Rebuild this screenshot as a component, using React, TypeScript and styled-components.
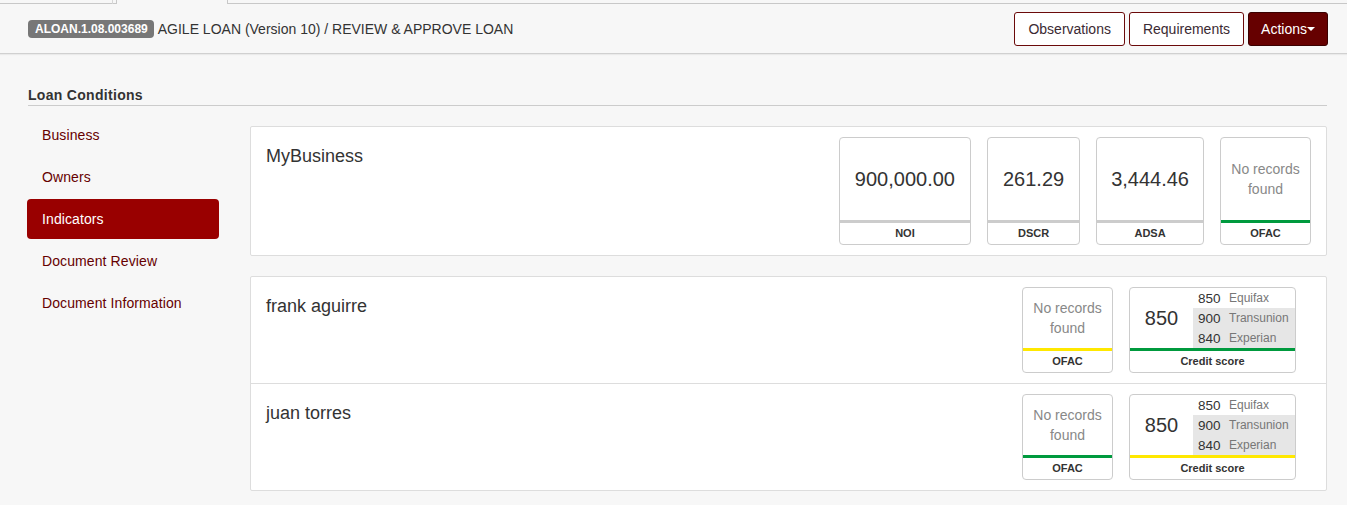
import React from "react";
import styled, { createGlobalStyle } from "styled-components";

const GlobalStyle = createGlobalStyle`
  html, body { margin: 0; padding: 0; background: #f7f7f7; }
  body { font-family: "Liberation Sans", Arial, sans-serif; font-size: 14px; color: #333; }
  * { box-sizing: border-box; }
`;

const Page = styled.div`
  width: 1347px;
  min-height: 505px;
  background: #f7f7f7;
`;

const TabStrip = styled.div`
  display: flex;
  height: 4px;
`;

const PrevTab = styled.div`
  width: 117px;
  height: 4px;
  border-bottom: 1px solid #c8c8c8;
  border-right: 1px solid #c8c8c8;
  position: relative;
  &::after {
    content: "";
    position: absolute;
    top: 0;
    right: 3px;
    width: 1px;
    height: 4px;
    background: #d6d6d6;
  }
`;

const ActiveTab = styled.div`
  width: 110px;
`;

const TabFill = styled.div`
  flex: 1;
  height: 4px;
  border-bottom: 1px solid #c8c8c8;
  border-left: 1px solid #c8c8c8;
`;

const Header = styled.header`
  height: 50px;
  display: flex;
  align-items: center;
  justify-content: space-between;
  padding: 0 19px 0 28px;
  border-bottom: 1px solid #d0d0d0;
  box-shadow: 0 1px 1px rgba(0, 0, 0, 0.05);
`;

const Crumb = styled.div`
  display: flex;
  align-items: center;
  gap: 4px;
  font-size: 14px;
  color: #333;
`;

const Badge = styled.span`
  display: inline-block;
  height: 18px;
  line-height: 18px;
  padding: 0 6px 0 7px;
  border-radius: 4px;
  background: #777;
  color: #fff;
  font-weight: bold;
  font-size: 12px;
`;

const ButtonGroup = styled.div`
  display: flex;
  gap: 4px;
`;

const Button = styled.button<{ $primary?: boolean }>`
  height: 34px;
  padding: 0 ${(p) => (p.$primary ? 12 : 13)}px;
  font-family: "Liberation Sans", Arial, sans-serif;
  font-size: 14px;
  border-radius: 3px;
  border: 1px solid ${(p) => (p.$primary ? "#3a0000" : "#6b0a0a")};
  background: ${(p) => (p.$primary ? "#660000" : "#fff")};
  color: ${(p) => (p.$primary ? "#fff" : "#3b2a33")};
  display: inline-flex;
  align-items: center;
  cursor: pointer;
`;

const Caret = styled.span`
  display: inline-block;
  width: 0;
  height: 0;
  border-top: 4px solid #fff;
  border-left: 4px solid transparent;
  border-right: 4px solid transparent;
  margin-top: 1px;
`;

const Content = styled.main`
  padding: 0 20px 0 27px;
`;

const SectionTitle = styled.h2`
  margin: 32px 0 0 1px;
  font-size: 14px;
  font-weight: bold;
  letter-spacing: 0.3px;
  line-height: 18px;
  color: #333;
  padding-bottom: 1px;
  border-bottom: 1px solid #ccc;
`;

const Body = styled.div`
  display: grid;
  grid-template-columns: 192px 1fr;
  column-gap: 31px;
`;

const Nav = styled.nav`
  display: flex;
  flex-direction: column;
  gap: 2px;
  padding-top: 9px;
`;

const NavItem = styled.a<{ $active?: boolean }>`
  display: block;
  height: 40px;
  line-height: 40px;
  padding: 0 15px;
  border-radius: 4px;
  font-size: 14px;
  letter-spacing: 0.1px;
  text-decoration: none;
  color: ${(p) => (p.$active ? "#fff" : "#660000")};
  background: ${(p) => (p.$active ? "#990000" : "transparent")};
`;

const Main = styled.div`
  padding-top: 20px;
  display: flex;
  flex-direction: column;
  gap: 20px;
`;

const Panel = styled.section`
  background: #fff;
  border: 1px solid #ddd;
  border-radius: 2px;
`;

const Row = styled.div<{ $padRight: number }>`
  display: flex;
  justify-content: space-between;
  align-items: flex-start;
  padding: 10px ${(p) => p.$padRight}px 10px 15px;
  & + & {
    border-top: 1px solid #ddd;
  }
`;

const Name = styled.div`
  margin-top: 9px;
  font-size: 18px;
  line-height: 20px;
  color: #333;
`;

const Cards = styled.div`
  display: flex;
  gap: 16px;
`;

const Card = styled.div`
  border: 1px solid #ccc;
  border-radius: 4px;
  background: #fff;
  display: flex;
  flex-direction: column;
  overflow: hidden;
`;

const CardValue = styled.div<{ $h: number; $muted?: boolean; $pad: number }>`
  height: ${(p) => p.$h}px;
  display: flex;
  align-items: center;
  justify-content: center;
  text-align: center;
  padding: 0 ${(p) => p.$pad}px;
  font-size: ${(p) => (p.$muted ? "14px" : "20px")};
  line-height: 20px;
  color: ${(p) => (p.$muted ? "#888" : "#333")};
`;

const Bar = styled.div<{ $color: string }>`
  height: 3px;
  background: ${(p) => p.$color};
`;

const CardLabel = styled.div`
  height: 21px;
  line-height: 21px;
  text-align: center;
  font-size: 11px;
  font-weight: bold;
  color: #333;
`;

const ScoreBody = styled.div`
  height: 60px;
  display: flex;
`;

const ScoreMain = styled.div`
  width: 63px;
  display: flex;
  align-items: center;
  justify-content: center;
  font-size: 20px;
  color: #333;
`;

const ScoreTable = styled.div`
  flex: 1;
  display: flex;
  flex-direction: column;
`;

const ScoreRow = styled.div<{ $shaded?: boolean }>`
  height: 20px;
  display: flex;
  align-items: center;
  padding-left: 5px;
  background: ${(p) => (p.$shaded ? "#e6e6e6" : "transparent")};
`;

const ScoreNum = styled.span`
  width: 31px;
  font-size: 13.5px;
  color: #333;
`;

const Bureau = styled.span`
  font-size: 12px;
  color: #777;
`;

const GREY = "#cccccc";
const GREEN = "#009a3e";
const YELLOW = "#ffe800";

type Metric = { label: string; value: string; muted?: boolean; bar: string; pad: number };

const metrics: Metric[] = [
  { label: "NOI", value: "900,000.00", bar: GREY, pad: 15 },
  { label: "DSCR", value: "261.29", bar: GREY, pad: 15 },
  { label: "ADSA", value: "3,444.46", bar: GREY, pad: 14 },
  { label: "OFAC", value: "No records found", muted: true, bar: GREEN, pad: 10 },
];

const owners = [
  { name: "frank aguirre", ofac: YELLOW, credit: GREEN },
  { name: "juan torres", ofac: GREEN, credit: YELLOW },
];

const bureaus = [
  { score: "850", name: "Equifax", shaded: false },
  { score: "900", name: "Transunion", shaded: true },
  { score: "840", name: "Experian", shaded: true },
];

const navItems = ["Business", "Owners", "Indicators", "Document Review", "Document Information"];

export default function App() {
  return (
    <Page>
      <GlobalStyle />
      <TabStrip>
        <PrevTab />
        <ActiveTab />
        <TabFill />
      </TabStrip>
      <Header>
        <Crumb>
          <Badge>ALOAN.1.08.003689</Badge>
          <span>AGILE LOAN (Version 10) / REVIEW &amp; APPROVE LOAN</span>
        </Crumb>
        <ButtonGroup>
          <Button>Observations</Button>
          <Button>Requirements</Button>
          <Button $primary>
            Actions
            <Caret />
          </Button>
        </ButtonGroup>
      </Header>
      <Content>
        <SectionTitle>Loan Conditions</SectionTitle>
        <Body>
          <Nav>
            {navItems.map((n) => (
              <NavItem key={n} $active={n === "Indicators"}>
                {n}
              </NavItem>
            ))}
          </Nav>
          <Main>
            <Panel>
              <Row $padRight={15}>
                <Name>MyBusiness</Name>
                <Cards>
                  {metrics.map((m) => (
                    <Card key={m.label} style={m.muted ? { width: 91 } : undefined}>
                      <CardValue $h={82} $muted={m.muted} $pad={m.pad}>
                        {m.value}
                      </CardValue>
                      <Bar $color={m.bar} />
                      <CardLabel>{m.label}</CardLabel>
                    </Card>
                  ))}
                </Cards>
              </Row>
            </Panel>
            <Panel>
              {owners.map((o) => (
                <Row key={o.name} $padRight={30}>
                  <Name>{o.name}</Name>
                  <Cards>
                    <Card style={{ width: 91 }}>
                      <CardValue $h={60} $muted $pad={10}>
                        No records found
                      </CardValue>
                      <Bar $color={o.ofac} />
                      <CardLabel>OFAC</CardLabel>
                    </Card>
                    <Card style={{ width: 167 }}>
                      <ScoreBody>
                        <ScoreMain>850</ScoreMain>
                        <ScoreTable>
                          {bureaus.map((b) => (
                            <ScoreRow key={b.name} $shaded={b.shaded}>
                              <ScoreNum>{b.score}</ScoreNum>
                              <Bureau>{b.name}</Bureau>
                            </ScoreRow>
                          ))}
                        </ScoreTable>
                      </ScoreBody>
                      <Bar $color={o.credit} />
                      <CardLabel>Credit score</CardLabel>
                    </Card>
                  </Cards>
                </Row>
              ))}
            </Panel>
          </Main>
        </Body>
      </Content>
    </Page>
  );
}
